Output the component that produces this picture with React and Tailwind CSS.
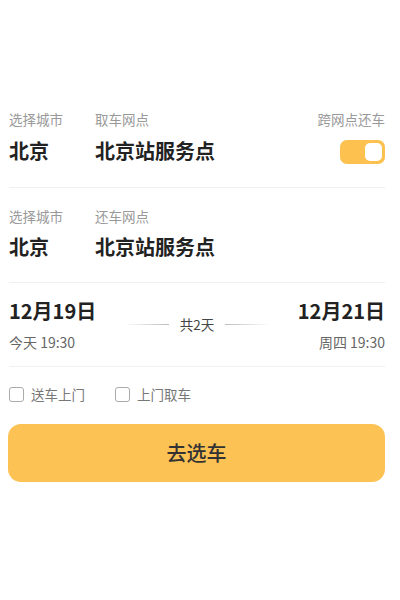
export default function App() {
  const font = { fontFamily: '"Noto Sans CJK SC", "Noto Sans", sans-serif' }

  return (
    <div className="w-[400px] h-[600px] bg-white pl-[9px] pr-[15px] pt-[107px] text-[#222]" style={font}>
      {/* pickup block */}
      <div className="border-b border-[#f0f0f0] pb-[21px]">
        <div className="flex items-start">
          <div className="w-[86px]">
            <div className="text-[13.5px] leading-[24px] text-[#999]">选择城市</div>
            <div className="text-[20px] font-bold leading-[30px] mt-[5px]">北京</div>
          </div>
          <div className="flex-1">
            <div className="text-[13.5px] leading-[24px] text-[#999]">取车网点</div>
            <div className="text-[20px] font-bold leading-[30px] mt-[5px]">北京站服务点</div>
          </div>
          <div className="flex flex-col items-end">
            <div className="text-[13.5px] leading-[24px] text-[#999]">跨网点还车</div>
            <div className="mt-[9px] w-[45px] h-[24px] rounded-[7px] bg-[#fcc14f] flex items-center justify-end pr-[3px]">
              <div className="w-[17px] h-[18px] rounded-[5px] bg-white" />
            </div>
          </div>
        </div>
      </div>

      {/* return block */}
      <div className="border-b border-[#f0f0f0] pt-[16px] pb-[20px]">
        <div className="flex items-start">
          <div className="w-[86px]">
            <div className="text-[13.5px] leading-[24px] text-[#999]">选择城市</div>
            <div className="text-[20px] font-bold leading-[30px] mt-[4px]">北京</div>
          </div>
          <div className="flex-1">
            <div className="text-[13.5px] leading-[24px] text-[#999]">还车网点</div>
            <div className="text-[20px] font-bold leading-[30px] mt-[4px]">北京站服务点</div>
          </div>
        </div>
      </div>

      {/* dates */}
      <div className="border-b border-[#f0f0f0] pt-[13px] pb-[14px] flex items-center justify-between">
        <div>
          <div className="text-[20px] font-bold leading-[30px]">12月19日</div>
          <div className="text-[14px] leading-[20px] text-[#666] mt-[6px]">今天 19:30</div>
        </div>
        <div className="flex items-center gap-[11px]">
          <div className="w-[45px] h-px bg-gradient-to-r from-transparent to-[#bbb]" />
          <span className="text-[13.5px] text-[#444]">共2天</span>
          <div className="w-[45px] h-px bg-gradient-to-r from-[#bbb] to-transparent" />
        </div>
        <div className="flex flex-col items-end">
          <div className="text-[20px] font-bold leading-[30px]">12月21日</div>
          <div className="text-[14px] leading-[20px] text-[#666] mt-[6px]">周四 19:30</div>
        </div>
      </div>

      {/* options */}
      <div className="flex items-center gap-[30px] pt-[17px] pb-[20px]">
        <label className="flex items-center gap-[7px]">
          <span className="w-[15px] h-[15px] rounded-[3px] border-[1.5px] border-[#aaa]" />
          <span className="text-[13.5px] text-[#777]">送车上门</span>
        </label>
        <label className="flex items-center gap-[7px]">
          <span className="w-[15px] h-[15px] rounded-[3px] border-[1.5px] border-[#aaa]" />
          <span className="text-[13.5px] text-[#777]">上门取车</span>
        </label>
      </div>

      <button className="w-[377px] -ml-px h-[58px] rounded-[13px] bg-[#fcc253] text-[20px] text-[#333] font-medium">
        去选车
      </button>
    </div>
  )
}
